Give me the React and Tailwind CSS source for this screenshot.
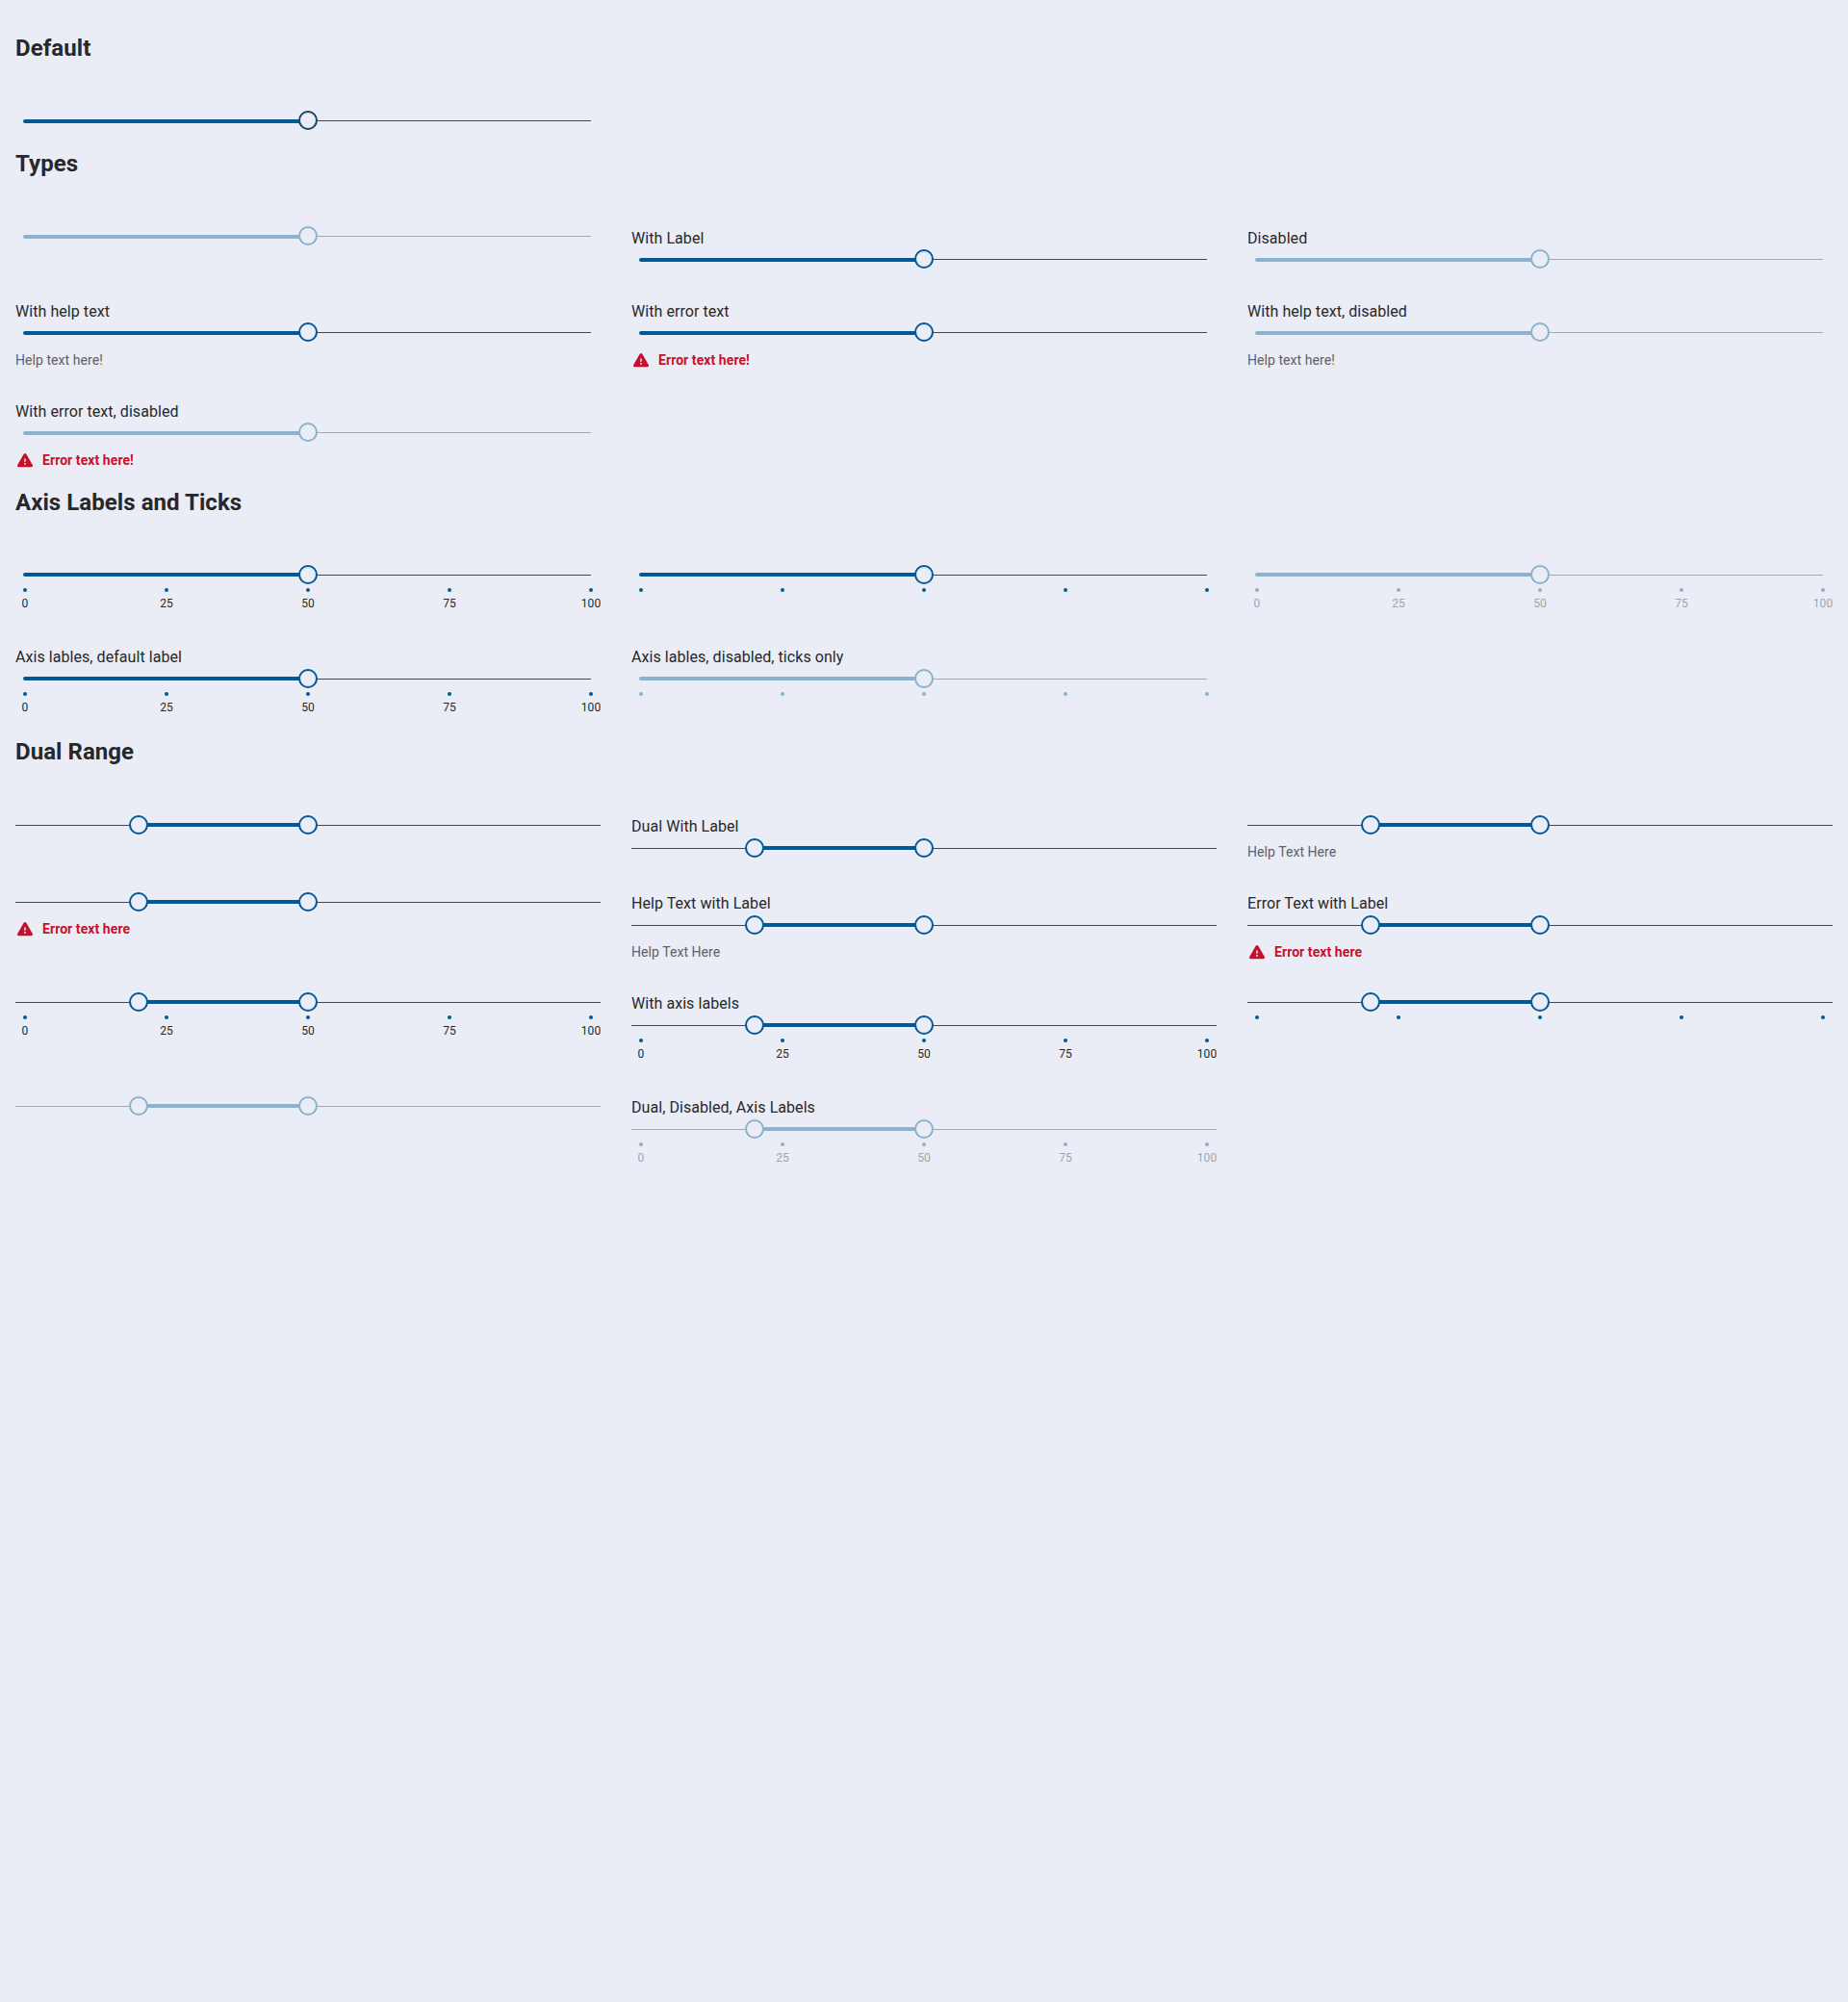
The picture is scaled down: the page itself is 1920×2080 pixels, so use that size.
const ticks = [0, 25, 50, 75, 100];

function Thumb({ at, color }) {
  return (
    <span
      className={`absolute top-0 size-5 rounded-full border-2 bg-[#eaedf5] ${color}`}
      style={{ left: `${Math.round(at * 5.88)}px` }}
    />
  );
}

function Slider({ label, dual, disabled, focused, axis, labels, help, error }) {
  const plain = !dual && !axis;
  const line = disabled ? "bg-[#8cb3cd]" : "bg-[#005b94]";
  const border = disabled ? "border-[#8cb3cd]" : focused ? "border-[#1c4464]" : "border-[#005b94]";
  const helpTop = plain ? "pt-[9px]" : "pt-2";
  return (
    <div>
      {label && (
        <div className={`h-6 text-base leading-5 tracking-[0.06px] ${plain ? "pt-[3px]" : "pt-[2px]"}`}>{label}</div>
      )}
      <div className="relative h-5">
        <span className={`absolute top-2.5 h-px ${line} ${dual ? "inset-x-0" : "inset-x-2.5"}`} />
        <span
          className={`absolute h-1 ${plain ? "top-[9px]" : "top-2"} ${line} ${dual ? "left-[128px] w-[176px]" : "left-2 w-[296px] rounded-l-[2px]"}`}
        />
        {dual && <Thumb at={20} color={border} />}
        <Thumb at={50} color={border} />
      </div>
      {axis && (
        <div className="flex h-8 justify-between px-2 pt-1">
          {ticks.map((t) => (
            <div key={t} className="flex w-1 flex-col items-center">
              <span className={`size-1 shrink-0 rounded-full ${line}`} />
              {labels && (
                <span className={`mt-1 text-xs leading-4 tracking-[0.1px] ${disabled ? "text-[#a1a3a8]" : ""}`}>{t}</span>
              )}
            </div>
          ))}
        </div>
      )}
      {help && <div className={`h-7 text-sm leading-5 tracking-[0.06px] text-[#606066] ${helpTop}`}>{help}</div>}
      {error && (
        <div className={`flex h-7 items-start gap-2.5 pl-[2px] text-sm font-bold leading-5 tracking-[0.07px] text-[#c8102e] ${helpTop}`}>
          <svg className="mt-[3px]" width="16" height="15" viewBox="0 0 16 15">
            <path
              fill="currentColor"
              d="M6.7.8a1.500 1.500 0 0 1 2.600 0l6.500 11.200a1.500 1.500 0 0 1-1.300 2.300h-13A1.500 1.500 0 0 1 .2 12z"
            />
            <path d="M8 5.500v3.300M8 10v1.700" stroke="#eaedf5" strokeWidth="1.500" />
          </svg>
          {error}
        </div>
      )}
    </div>
  );
}

function Section({ title, titleTop = "pt-[19px]", children }) {
  return (
    <section>
      <h2 className={`h-[100px] text-2xl font-bold leading-8 tracking-[0.06px] ${titleTop}`}>{title}</h2>
      <div className="grid grid-cols-3 gap-8">{children}</div>
    </section>
  );
}

export default function App() {
  return (
    <main className="min-h-[2080px] bg-[#eaedf5] px-4 pt-[15px] font-['Roboto',sans-serif] text-[#28282a]">
      <Section title="Default">
        <Slider focused />
      </Section>
      <Section title="Types">
        <Slider disabled />
        <Slider label="With Label" />
        <Slider label="Disabled" disabled />
        <Slider label="With help text" help="Help text here!" />
        <Slider label="With error text" error="Error text here!" />
        <Slider label="With help text, disabled" help="Help text here!" disabled />
        <Slider label="With error text, disabled" error="Error text here!" disabled />
      </Section>
      <Section title="Axis Labels and Ticks">
        <Slider axis labels />
        <Slider axis />
        <Slider axis labels disabled />
        <Slider label="Axis lables, default label" axis labels />
        <Slider label="Axis lables, disabled, ticks only" axis disabled />
      </Section>
      <Section title="Dual Range" titleTop="pt-[18px]">
        <Slider dual />
        <Slider dual label="Dual With Label" />
        <Slider dual help="Help Text Here" />
        <Slider dual error="Error text here" />
        <Slider dual label="Help Text with Label" help="Help Text Here" />
        <Slider dual label="Error Text with Label" error="Error text here" />
        <Slider dual axis labels />
        <Slider dual label="With axis labels" axis labels />
        <Slider dual axis />
        <Slider dual disabled />
        <Slider dual label="Dual, Disabled, Axis Labels" axis labels disabled />
      </Section>
    </main>
  );
}
